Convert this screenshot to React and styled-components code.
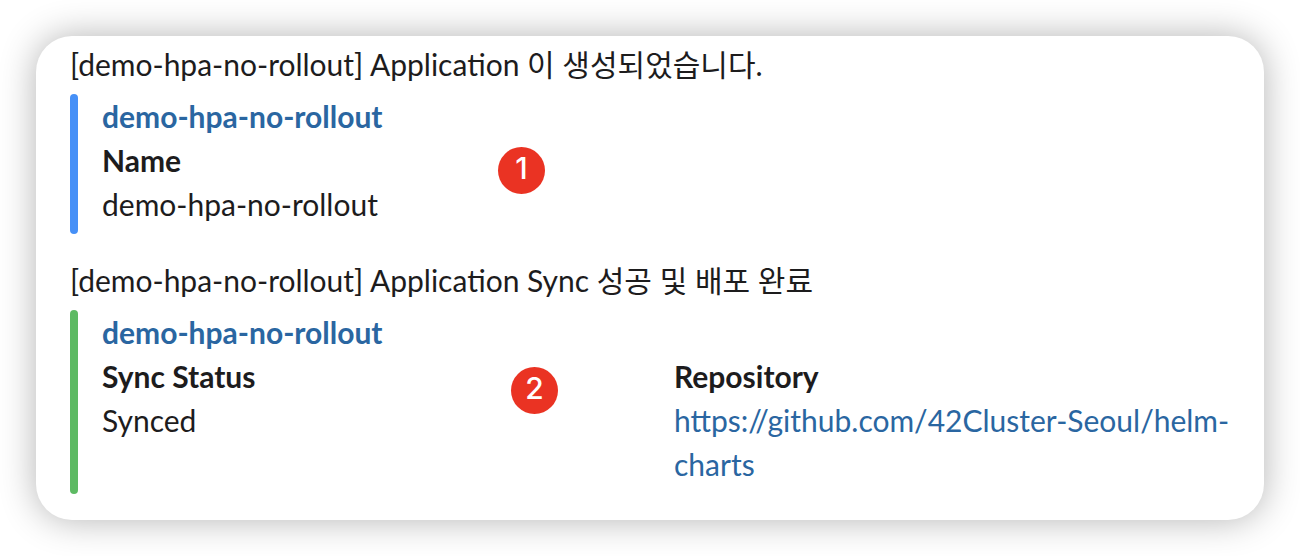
import React from "react";
import styled, { createGlobalStyle } from "styled-components";

const GlobalStyle = createGlobalStyle`
  * { box-sizing: border-box; }
  body {
    margin: 0;
    background: #fff;
    color: #1d1c1d;
    font-family: Lato, "Noto Sans CJK KR", sans-serif;
    font-size: 30px;
    line-height: 44px;
  }
`;

const Page = styled.main`
  padding: 36px;
`;

const Card = styled.section`
  display: flex;
  flex-direction: column;
  gap: 24px;
  padding: 6px 34px 26px;
  border-radius: 36px;
  background: #fff;
  box-shadow: 0 0 36px rgba(0, 0, 0, 0.3);
`;

const Message = styled.article`
  display: flex;
  flex-direction: column;
  gap: 8px;
`;

const Text = styled.p`
  margin: 0;
`;

const Attachment = styled.div`
  position: relative;
  display: flex;
  gap: 24px;
`;

const Bar = styled.div`
  flex: none;
  width: 8px;
  border-radius: 4px;
  background: ${(p) => p.$color};
`;

const Body = styled.div`
  flex: 1;
  min-width: 0;
  padding-bottom: 8px;
`;

const Link = styled.a`
  color: #2a66a1;
  font-weight: ${(p) => (p.$bold ? 700 : 400)};
  text-decoration: none;
`;

const Fields = styled.dl`
  display: grid;
  grid-template-columns: 1fr 1fr;
  column-gap: 16px;
  margin: 0;
`;

const Label = styled.dt`
  font-weight: 700;
`;

const Value = styled.dd`
  margin: 0;
`;

const Marker = styled.span`
  position: absolute;
  top: ${(p) => p.$top}px;
  left: ${(p) => p.$left}px;
  width: 47px;
  height: 47px;
  border-radius: 50%;
  background: #ea3323;
  color: #fff;
  font-family: Inter, sans-serif;
  font-size: 30px;
  font-weight: 500;
  line-height: 42px;
  text-align: center;
`;

export default function App() {
  return (
    <>
      <GlobalStyle />
      <Page>
        <Card>
          <Message>
            <Text>[demo-hpa-no-rollout] Application 이 생성되었습니다.</Text>
            <Attachment>
              <Bar $color="#4690f7" />
              <Body>
                <Link href="#demo" $bold>demo-hpa-no-rollout</Link>
                <Fields>
                  <div>
                    <Label>Name</Label>
                    <Value>demo-hpa-no-rollout</Value>
                  </div>
                </Fields>
              </Body>
              <Marker $top={53} $left={428}>1</Marker>
            </Attachment>
          </Message>
          <Message>
            <Text>[demo-hpa-no-rollout] Application Sync 성공 및 배포 완료</Text>
            <Attachment>
              <Bar $color="#5dba63" />
              <Body>
                <Link href="#demo" $bold>demo-hpa-no-rollout</Link>
                <Fields>
                  <div>
                    <Label>Sync Status</Label>
                    <Value>Synced</Value>
                  </div>
                  <div>
                    <Label>Repository</Label>
                    <Value>
                      <Link href="https://github.com/42Cluster-Seoul/helm-charts">
                        https://github.com/42Cluster-Seoul/helm-charts
                      </Link>
                    </Value>
                  </div>
                </Fields>
              </Body>
              <Marker $top={57} $left={441}>2</Marker>
            </Attachment>
          </Message>
        </Card>
      </Page>
    </>
  );
}
